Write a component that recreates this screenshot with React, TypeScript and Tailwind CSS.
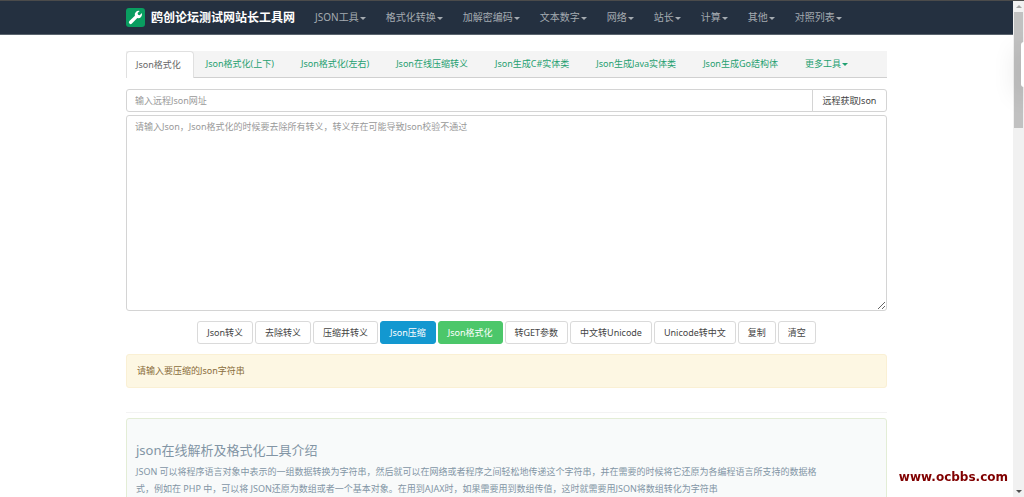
import React, { useState } from 'react';
import clsx from 'clsx';

const navItems = ['JSON工具', '格式化转换', '加解密编码', '文本数字', '网络', '站长', '计算', '其他', '对照列表'];

const tabs = [
  'Json格式化',
  'Json格式化(上下)',
  'Json格式化(左右)',
  'Json在线压缩转义',
  'Json生成C#实体类',
  'Json生成Java实体类',
  'Json生成Go结构体',
];

interface Action {
  label: string;
  tone?: 'blue' | 'green';
}

const actions: Action[] = [
  { label: 'Json转义' },
  { label: '去除转义' },
  { label: '压缩并转义' },
  { label: 'Json压缩', tone: 'blue' },
  { label: 'Json格式化', tone: 'green' },
  { label: '转GET参数' },
  { label: '中文转Unicode' },
  { label: 'Unicode转中文' },
  { label: '复制' },
  { label: '清空' },
];

function Caret() {
  return <span className="ml-px inline-block border-x-3 border-t-3 border-x-transparent border-t-current align-middle" />;
}

function Logo() {
  return (
    <svg viewBox="0 0 19 19" className="h-[19px] w-[19px]" aria-hidden="true">
      <rect width="19" height="19" rx="3" fill="#099d60" />
      <path
        d="M15.8 5.1 13.7 7.2 12 6.8 11.6 5.1 13.7 3A3.8 3.8 0 0 0 8.9 7.7L3.4 13.1A1.7 1.7 0 0 0 5.9 15.6L11.3 10.1A3.8 3.8 0 0 0 15.8 5.1Z"
        fill="#fff"
      />
    </svg>
  );
}

function Navbar() {
  return (
    <header className="border-y border-t-[#4b4b4b] border-b-[#5a646e] bg-[#243040]">
      <nav className="mx-auto flex h-[33px] max-w-[761px] items-center">
        <a href="#" className="flex items-center gap-1.5 text-[12px] font-bold whitespace-nowrap text-white">
          <Logo />
          鸥创论坛测试网站长工具网
        </a>
        <ul className="ml-5 flex gap-5 text-[10px] whitespace-nowrap text-[#a5abb1]">
          {navItems.map((item) => (
            <li key={item}>
              <a href="#">
                {item}
                <Caret />
              </a>
            </li>
          ))}
        </ul>
      </nav>
    </header>
  );
}

function ToolTabs() {
  return (
    <ul className="flex h-[27px] border-b border-[#d0d0d0] bg-[#f4f4f4] text-[9px] whitespace-nowrap text-[#1fa070]">
      {tabs.map((tab, i) => (
        <li
          key={tab}
          className={clsx(
            'flex items-center',
            i === 0
              ? '-mb-px rounded-t border border-b-0 border-[#e0e0e0] bg-white pr-3 pl-[9px] text-[#666666]'
              : 'pr-[15px] pl-3',
          )}
        >
          <a href="#">{tab}</a>
        </li>
      ))}
      <li className="flex items-center px-3">
        <a href="#">
          更多工具
          <Caret />
        </a>
      </li>
    </ul>
  );
}

// Page scrollbar, drawn beside the content
function ScrollRail() {
  return (
    <div className="relative flex w-[11px] shrink-0 flex-col items-center justify-between border-t border-[#4b4b4b] bg-[#f1f1f1]" aria-hidden="true">
      <div className="flex w-full flex-col items-center">
        <span className="my-1 border-x-3 border-b-3 border-x-transparent border-b-[#a3a3a3]" />
        <span className="h-[116px] w-[9px] bg-[#c1c1c1]" />
      </div>
      <span className="mb-1 border-x-3 border-t-3 border-x-transparent border-t-[#505050]" />
      <span className="absolute top-[41px] right-0 h-[45px] w-[3px] rounded-l bg-white shadow-[0_8px_24px_2px_rgba(0,0,0,0.2)]" />
    </div>
  );
}

export default function App() {
  const [url, setUrl] = useState('');
  const [source, setSource] = useState('');

  return (
    <div className="flex h-screen overflow-hidden bg-white font-['Noto_Sans','Noto_Sans_CJK_SC',sans-serif]">
      <div className="min-w-0 flex-1">
        <Navbar />
        <main className="mx-auto max-w-[761px] pt-4">
          <ToolTabs />

          <div className="mt-[11px] flex h-[23px] text-[9px]">
            <input
              type="text"
              aria-label="输入远程Json网址"
              placeholder="输入远程Json网址"
              value={url}
              onChange={(e) => setUrl(e.target.value)}
              className="min-w-0 flex-1 rounded-l-[3px] border border-[#d4d4d4] px-2 placeholder:text-[#999999]"
            />
            <button className="-ml-px w-[75px] rounded-r-[3px] border border-[#d4d4d4] text-center whitespace-nowrap text-[#444444]">
              远程获取Json
            </button>
          </div>
          <textarea
            aria-label="Json"
            placeholder="请输入Json，Json格式化的时候要去除所有转义，转义存在可能导致Json校验不通过"
            value={source}
            onChange={(e) => setSource(e.target.value)}
            className="mt-[3px] block h-[196px] w-full resize rounded-[3px] border border-[#d4d4d4] px-2 py-1 text-[9px] leading-[14px] placeholder:text-[#999999]"
          />

          <div className="mt-[10px] flex justify-center gap-[2px] text-[9px] whitespace-nowrap">
            {actions.map(({ label, tone }) => (
              <button
                key={label}
                className={clsx(
                  'h-[23px] rounded-[3px] border px-[9px]',
                  !tone && 'border-[#dadada] bg-white text-[#444444]',
                  tone === 'blue' && 'border-[#1398d0] bg-[#1398d0] text-white',
                  tone === 'green' && 'border-[#4cc76a] bg-[#4cc76a] text-white',
                )}
              >
                {label}
              </button>
            ))}
          </div>

          <div className="mt-[10px] flex h-[34px] items-center rounded-[3px] border border-[#faf0d4] bg-[#fdf7e3] px-[10px] text-[9px] text-[#8a6d3b]">
            请输入要压缩的Json字符串
          </div>

          <hr className="mt-6 border-[#f3f3f3]" />

          <section className="mt-[5px] h-40 rounded-[3px] border border-[#e3edd6] bg-[#f8fafa] px-[9px] pt-[22px] text-[#8295a5]">
            <h1 className="text-[13px] leading-[18px]">json在线解析及格式化工具介绍</h1>
            <p className="mt-1 text-[9px] leading-[17px]">
              JSON 可以将程序语言对象中表示的一组数据转换为字符串，然后就可以在网络或者程序之间轻松地传递这个字符串，并在需要的时候将它还原为各编程语言所支持的数据格
              <br />
              式，例如在 PHP 中，可以将 JSON还原为数组或者一个基本对象。在用到AJAX时，如果需要用到数组传值，这时就需要用JSON将数组转化为字符串
            </p>
          </section>
        </main>
      </div>
      <ScrollRail />
      <span className="fixed right-4 bottom-[11px] font-['DejaVu_Sans',sans-serif] text-[12px] leading-[18px] font-bold text-[#800000]">
        www.ocbbs.com
      </span>
    </div>
  );
}
